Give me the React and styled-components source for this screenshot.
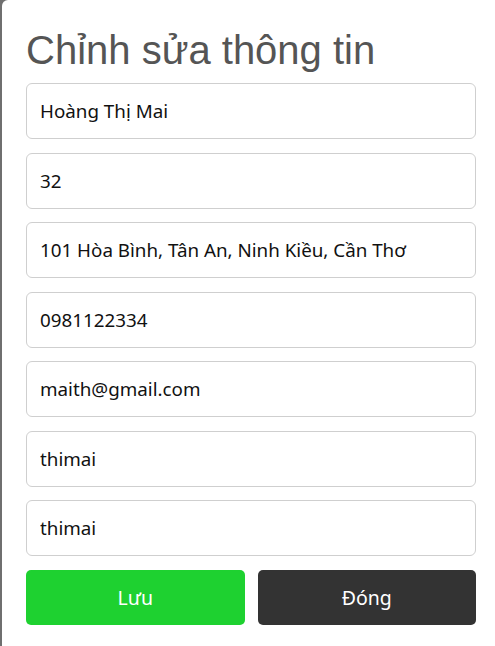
import React from 'react';
import styled, { createGlobalStyle } from 'styled-components';

const GlobalStyle = createGlobalStyle`
    html, body {
        margin: 0;
        padding: 0;
        background: #6f6f6f;
    }
    body {
        font-family: "Noto Sans", "Open Sans", sans-serif;
    }
`;

const Backdrop = styled.div`
    min-height: 646px;
    padding-left: 2px;
    display: flex;
`;

const Modal = styled.div`
    flex: 1;
    background: #fff;
    border-top-left-radius: 6px;
    padding: 26px 19px 20px 24px;
    display: flex;
    flex-direction: column;
`;

const Title = styled.h2`
    margin: 0 0 9px;
    font-family: "Liberation Sans", Arial, sans-serif;
    font-weight: 400;
    font-size: 40px;
    line-height: 48px;
    color: #555;
`;

const Form = styled.form`
    display: flex;
    flex-direction: column;
    gap: 13.5px;
`;

const Field = styled.input`
    box-sizing: border-box;
    height: 56px;
    width: 100%;
    padding: 0 13px;
    border: 1px solid #cfcfcf;
    border-radius: 6px;
    font-family: "Noto Sans", "Open Sans", sans-serif;
    font-size: 18.8px;
    color: #111;
    background: #fff;
    outline: none;
`;

const Actions = styled.div`
    display: grid;
    grid-template-columns: 1fr 1fr;
    gap: 13px;
    margin-top: 0.5px;
`;

const Button = styled.button`
    height: 55px;
    border: none;
    border-radius: 5px;
    font-family: "Noto Sans", "Open Sans", sans-serif;
    font-size: 19.5px;
    color: #fff;
    background: ${({ $variant }) => ($variant === 'save' ? '#1ed130' : '#333333')};
    cursor: pointer;
`;

const fields = [
    'Hoàng Thị Mai',
    '32',
    '101 Hòa Bình, Tân An, Ninh Kiều, Cần Thơ',
    '0981122334',
    'maith@gmail.com',
    'thimai',
    'thimai',
];

export default function App() {
    return (
        <>
            <GlobalStyle />
            <Backdrop>
                <Modal>
                    <Title>Chỉnh sửa thông tin</Title>
                    <Form onSubmit={(e) => e.preventDefault()}>
                        {fields.map((value, i) => (
                            <Field key={i} defaultValue={value} />
                        ))}
                        <Actions>
                            <Button type="submit" $variant="save">Lưu</Button>
                            <Button type="button">Đóng</Button>
                        </Actions>
                    </Form>
                </Modal>
            </Backdrop>
        </>
    );
}
